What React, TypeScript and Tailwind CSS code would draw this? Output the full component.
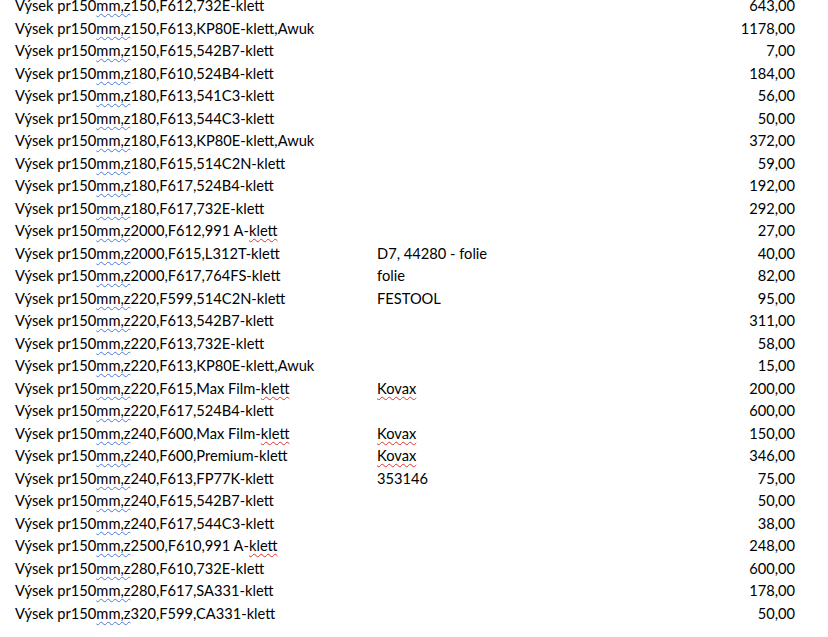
const rows: [string, string, string, string][] = [
  // [code after "Výsek pr150mm,", red-underlined tail, note, amount]
  ['z150,F612,732E-klett', '', '', '643,00'],
  ['z150,F613,KP80E-klett,Awuk', '', '', '1178,00'],
  ['z150,F615,542B7-klett', '', '', '7,00'],
  ['z180,F610,524B4-klett', '', '', '184,00'],
  ['z180,F613,541C3-klett', '', '', '56,00'],
  ['z180,F613,544C3-klett', '', '', '50,00'],
  ['z180,F613,KP80E-klett,Awuk', '', '', '372,00'],
  ['z180,F615,514C2N-klett', '', '', '59,00'],
  ['z180,F617,524B4-klett', '', '', '192,00'],
  ['z180,F617,732E-klett', '', '', '292,00'],
  ['z2000,F612,991 A-', 'klett', '', '27,00'],
  ['z2000,F615,L312T-klett', '', 'D7, 44280 - folie', '40,00'],
  ['z2000,F617,764FS-klett', '', 'folie', '82,00'],
  ['z220,F599,514C2N-klett', '', 'FESTOOL', '95,00'],
  ['z220,F613,542B7-klett', '', '', '311,00'],
  ['z220,F613,732E-klett', '', '', '58,00'],
  ['z220,F613,KP80E-klett,Awuk', '', '', '15,00'],
  ['z220,F615,Max Film-', 'klett', 'Kovax*', '200,00'],
  ['z220,F617,524B4-klett', '', '', '600,00'],
  ['z240,F600,Max Film-', 'klett', 'Kovax*', '150,00'],
  ['z240,F600,Premium-klett', '', 'Kovax*', '346,00'],
  ['z240,F613,FP77K-klett', '', '353146', '75,00'],
  ['z240,F615,542B7-klett', '', '', '50,00'],
  ['z240,F617,544C3-klett', '', '', '38,00'],
  ['z2500,F610,991 A-', 'klett', '', '248,00'],
  ['z280,F610,732E-klett', '', '', '600,00'],
  ['z280,F617,SA331-klett', '', '', '178,00'],
  ['z320,F599,CA331-klett', '', '', '50,00'],
]

// spell / grammar check squiggles
const blue = 'underline decoration-wavy decoration-[#4a78d6] decoration-1 underline-offset-[2px]'
const red = 'underline decoration-wavy decoration-[#e03131] decoration-1 underline-offset-[2px]'

export default function App() {
  return (
    <div
      className="w-[828px] h-[637px] overflow-hidden bg-white text-black text-[14.67px] leading-[22.5px]"
      style={{ fontFamily: 'Lato, "Open Sans", sans-serif' }}
    >
      <div className="mt-[-5px] flex flex-col">
        {rows.map(([code, tail, note, amount], i) => {
          const kovax = note.endsWith('*')
          const noteText = kovax ? note.slice(0, -1) : note
          return (
            <div key={i} className="flex h-[22.5px] pl-[15px] pr-[33px] whitespace-nowrap">
              <div className="w-[362px]">
                Výsek pr150<span className={blue}>mm,{code.slice(0, 1)}</span>
                {code.slice(1)}
                {tail && <span className={red}>{tail}</span>}
              </div>
              <div className="flex-1">
                {kovax ? <span className={red}>{noteText}</span> : noteText}
              </div>
              <div className="text-right">{amount}</div>
            </div>
          )
        })}
      </div>
    </div>
  )
}
